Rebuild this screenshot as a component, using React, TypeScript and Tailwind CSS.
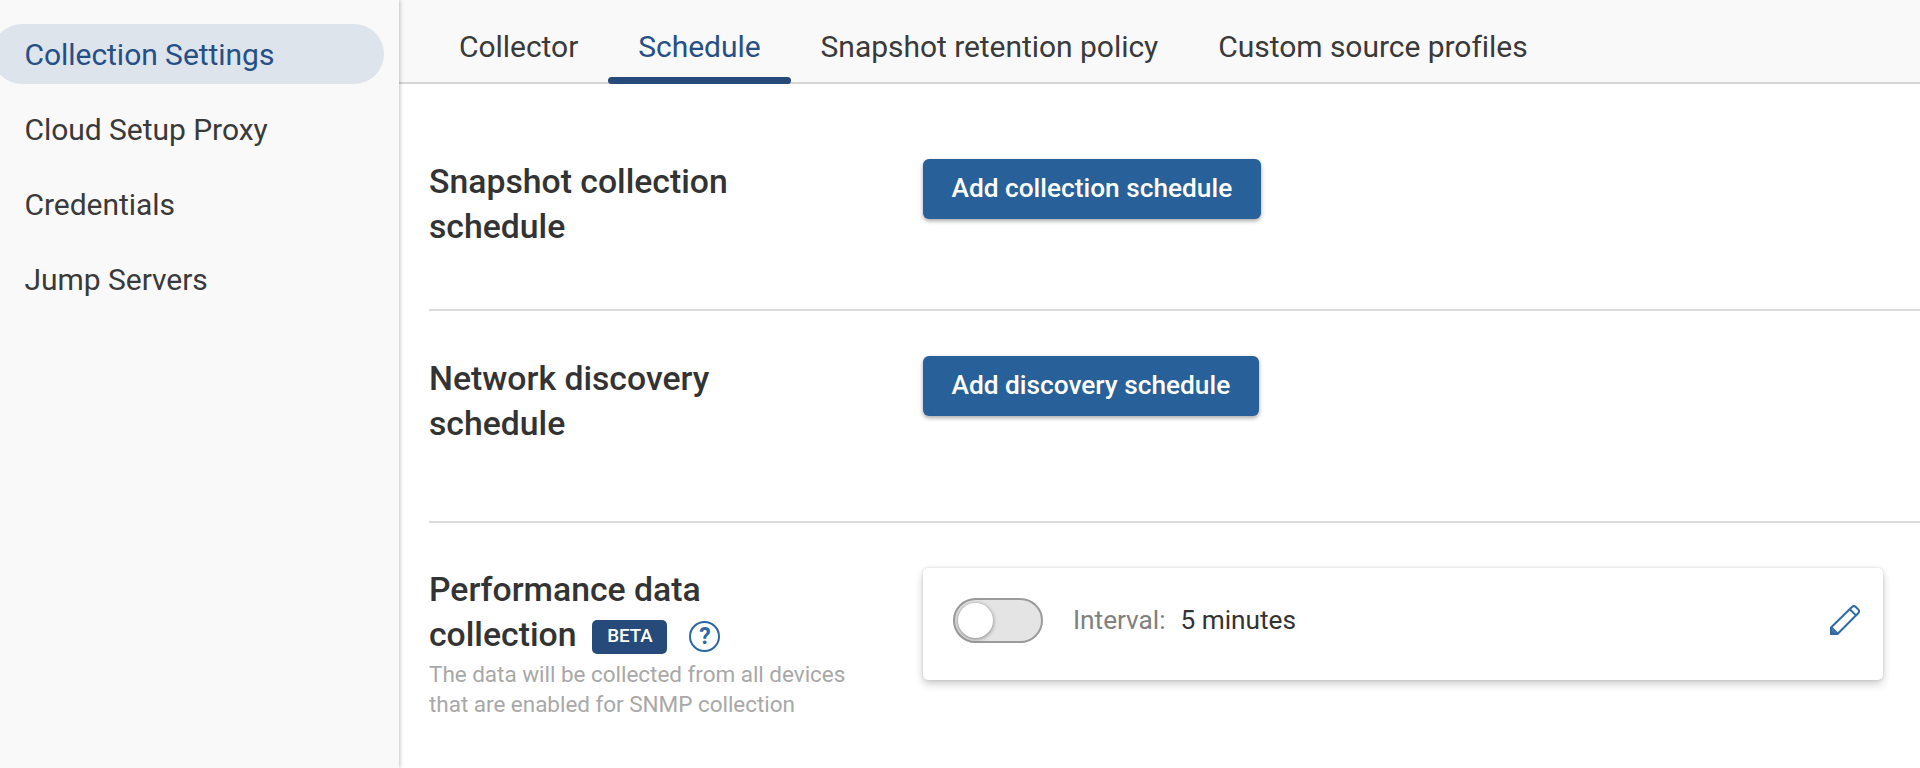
import React, { useState } from 'react';

const navItems = ['Collection Settings', 'Cloud Setup Proxy', 'Credentials', 'Jump Servers'];
const tabs = ['Collector', 'Schedule', 'Snapshot retention policy', 'Custom source profiles'];

const Sidebar: React.FC = () => (
  <nav className="w-[399px] shrink-0 bg-[#f9f9f9] pt-6 shadow-[1px_0_4px_rgba(0,0,0,0.24)] z-10">
    {navItems.map((item, i) => (
      <a
        key={item}
        className={`flex items-center -ml-2 w-[392px] h-[60px] mb-[15px] pl-[32.5px] rounded-full text-[30px] tracking-[-0.04px] ${
          i === 0 ? 'bg-[#dde4ec] text-[#264f86]' : 'text-[#3a3a3a]'
        }`}
      >
        {item}
      </a>
    ))}
  </nav>
);

const TabBar: React.FC = () => (
  <div className="flex h-[84px] pl-[30px] bg-[#f9f9f9] border-b-2 border-[#d6d6d6]">
    {tabs.map((tab) => (
      <button
        key={tab}
        className={`relative h-[84px] px-[30px] pt-[11px] pb-px text-[30px] leading-[72px] tracking-[-0.04px] ${
          tab === 'Schedule' ? 'text-[#264f86]' : 'text-[#3a3a3a]'
        }`}
      >
        {tab}
        {tab === 'Schedule' && (
          <span className="absolute left-0 bottom-0 w-full h-[7px] rounded bg-[#264b7b]" />
        )}
      </button>
    ))}
  </div>
);

const ScheduleButton: React.FC<{ label: string }> = ({ label }) => (
  <button className="h-[60px] px-[28.5px] rounded-[6px] bg-[#286199] text-white text-[26.25px] font-medium shadow-[0_2px_4px_rgba(0,0,0,0.35)]">
    {label}
  </button>
);

const SectionTitle: React.FC<{ children: React.ReactNode }> = ({ children }) => (
  <h2 className="text-[33.75px] leading-[45px] font-medium text-[#333333]">{children}</h2>
);

const HelpIcon: React.FC = () => (
  <span className="flex items-center justify-center size-[31px] rounded-full border-2 border-[#2a67a5] text-[#2a67a5] text-[23px] leading-none font-bold">
    ?
  </span>
);

const PencilIcon: React.FC = () => (
  <svg className="size-[30px]" viewBox="0 0 30 30" fill="none" stroke="#2f6aa5" strokeWidth="2" strokeLinejoin="round">
    <path d="M1 29V22.5L22.2 1.8Q24 .4 25.6 1.8L28.4 4.6Q29.8 6.2 28.4 8L7.5 29Z" />
    <path d="M19.8 4.2L26 10.4M1.5 22.5L7.5 28.5" />
    <path d="M1 25L5 29H1Z" fill="#2f6aa5" />
  </svg>
);

const Toggle: React.FC = () => {
  const [enabled, setEnabled] = useState(false);

  return (
    <button
      onClick={() => setEnabled(!enabled)}
      className={`flex items-center w-[90px] h-[45px] px-[3px] rounded-full border-2 border-[#9b9b9b] bg-[#e4e4e4] ${
        enabled ? 'justify-end' : 'justify-start'
      }`}
    >
      <span className="size-[35px] rounded-full bg-white shadow-[0_1px_4px_rgba(0,0,0,0.45)]" />
    </button>
  );
};

export default function App() {
  return (
    <div className="flex w-full h-screen overflow-hidden bg-white font-[Roboto,sans-serif]">
      <Sidebar />
      <main className="flex-1 min-w-0">
        <TabBar />
        <div className="pl-[30px]">
          <section className="flex items-start h-[227px] pt-[75px] border-b-2 border-[#dadcdc]">
            <div className="w-[494px]">
              <SectionTitle>Snapshot collection<br />schedule</SectionTitle>
            </div>
            <ScheduleButton label="Add collection schedule" />
          </section>
          <section className="flex items-start h-[212px] pt-[45px] border-b-2 border-[#dadcdc]">
            <div className="w-[494px]">
              <SectionTitle>Network discovery<br />schedule</SectionTitle>
            </div>
            <ScheduleButton label="Add discovery schedule" />
          </section>
          <section className="flex items-start pt-11">
            <div className="w-[494px]">
              <SectionTitle>Performance data</SectionTitle>
              <div className="flex items-center">
                <SectionTitle>collection</SectionTitle>
                <span className="flex items-center justify-center w-[75px] h-[34px] ml-4 mt-1 rounded-[5px] bg-[#264b7b] text-white text-[18.75px] font-medium">
                  BETA
                </span>
                <span className="ml-[22px] mt-1">
                  <HelpIcon />
                </span>
              </div>
              <p className="pt-0.5 text-[22.5px] leading-[30px] tracking-[-0.03px] text-[#a8a8a8]">
                The data will be collected from all devices<br />
                that are enabled for SNMP collection
              </p>
            </div>
            <div className="flex items-start w-[960px] h-[112px] mt-px pt-[30px] pl-[30px] pr-[23px] rounded-[5px] bg-white shadow-[0_4px_8px_rgba(0,0,0,0.2),0_0_3px_rgba(0,0,0,0.14)]">
              <Toggle />
              <div className="flex gap-[15px] ml-[30px] text-[26.25px] leading-[44px] tracking-[-0.03px]">
                <span className="text-[#808080]">Interval:</span>
                <span className="text-[#333333]">5 minutes</span>
              </div>
              <button className="ml-auto mt-[7px]">
                <PencilIcon />
              </button>
            </div>
          </section>
        </div>
      </main>
    </div>
  );
}
